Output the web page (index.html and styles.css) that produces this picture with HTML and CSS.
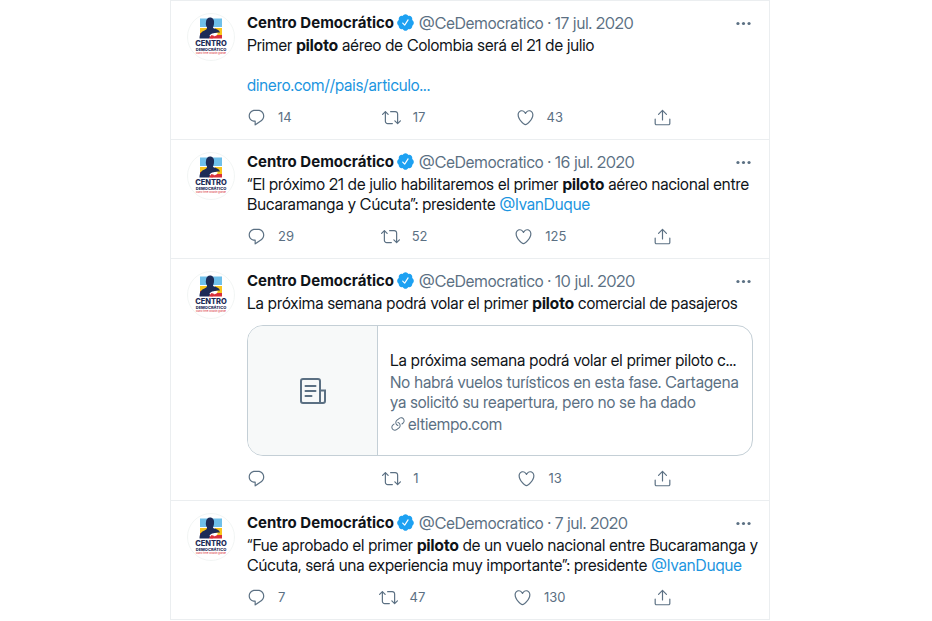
FILE: index.html
```html
<!DOCTYPE html>
<html lang="es">
<head>
<meta charset="utf-8">
<meta name="viewport" content="width=device-width, initial-scale=1">
<title>Centro Democrático</title>
<link rel="stylesheet" href="styles.css">
</head>
<body>
<svg class="sprite" aria-hidden="true">
  <symbol id="reply" viewBox="0 0 24 24"><path d="M14.046 2.242l-4.148-.01h-.002c-4.374 0-7.8 3.427-7.8 7.802 0 4.098 3.186 7.206 7.465 7.37v3.828c0 .108.044.286.12.403.142.225.384.347.632.347.138 0 .277-.038.402-.118.264-.168 6.473-4.14 8.088-5.506 1.902-1.61 3.04-3.97 3.043-6.312v-.017c-.006-4.367-3.43-7.787-7.8-7.788zm3.787 12.972c-1.134.96-4.862 3.405-6.772 4.643V16.67c0-.414-.335-.75-.75-.75h-.396c-3.66 0-6.318-2.476-6.318-5.886 0-3.534 2.768-6.302 6.3-6.302l4.147.01h.002c3.532 0 6.3 2.766 6.302 6.296-.003 1.91-.942 3.844-2.514 5.176z"/></symbol>
  <symbol id="retweet" viewBox="0 0 24 24"><path d="M23.77 15.67c-.292-.293-.767-.293-1.06 0l-2.22 2.22V7.65c0-2.068-1.683-3.75-3.75-3.75h-5.85c-.414 0-.75.336-.75.75s.336.75.75.75h5.85c1.24 0 2.25 1.01 2.25 2.25v10.24l-2.22-2.22c-.293-.293-.768-.293-1.06 0s-.294.768 0 1.06l3.5 3.5c.145.147.337.22.53.22s.383-.072.53-.22l3.5-3.5c.294-.292.294-.767 0-1.06zm-10.66 3.28H7.26c-1.24 0-2.25-1.01-2.25-2.25V6.46l2.22 2.22c.148.147.34.22.532.22s.384-.073.53-.22c.293-.293.293-.768 0-1.06l-3.5-3.5c-.293-.294-.768-.294-1.06 0l-3.5 3.5c-.294.292-.294.767 0 1.06s.767.293 1.06 0l2.22-2.22V16.7c0 2.068 1.683 3.75 3.75 3.75h5.85c.414 0 .75-.336.75-.75s-.337-.75-.75-.75z"/></symbol>
  <symbol id="like" viewBox="0 0 24 24"><path d="M12 21.638h-.014C9.403 21.59 1.95 14.856 1.95 8.478c0-3.064 2.525-5.754 5.403-5.754 2.29 0 3.83 1.58 4.646 2.73.814-1.148 2.354-2.73 4.645-2.73 2.88 0 5.404 2.69 5.404 5.755 0 6.376-7.454 13.11-10.037 13.157H12zM7.354 4.225c-2.08 0-3.903 1.988-3.903 4.255 0 5.74 7.034 11.596 8.55 11.658 1.518-.062 8.55-5.917 8.55-11.658 0-2.267-1.823-4.255-3.903-4.255-2.528 0-3.94 2.936-3.952 2.965-.23.562-1.156.562-1.387 0-.014-.03-1.425-2.965-3.954-2.965z"/></symbol>
  <symbol id="share" viewBox="0 0 24 24"><path d="M17.53 7.47l-5-5c-.293-.293-.768-.293-1.06 0l-5 5c-.294.293-.294.768 0 1.06s.767.294 1.06 0l3.72-3.72V15c0 .414.336.75.75.75s.75-.336.75-.75V4.81l3.72 3.72c.146.147.338.22.53.22s.384-.072.53-.22c.293-.293.293-.767 0-1.06z"/><path d="M19.708 21.944H4.292C3.028 21.944 2 20.916 2 19.652V14c0-.414.336-.75.75-.75s.75.336.75.75v5.652c0 .437.355.792.792.792h15.416c.437 0 .792-.355.792-.792V14c0-.414.336-.75.75-.75s.75.336.75.75v5.652c0 1.264-1.028 2.292-2.292 2.292z"/></symbol>
  <symbol id="more" viewBox="0 0 24 24"><circle cx="5" cy="12" r="2"/><circle cx="12" cy="12" r="2"/><circle cx="19" cy="12" r="2"/></symbol>
  <symbol id="verified" viewBox="0 0 24 24"><path d="M22.5 12.5c0-1.58-.875-2.95-2.148-3.6.154-.435.238-.905.238-1.4 0-2.21-1.71-3.998-3.818-3.998-.47 0-.92.084-1.336.25C14.818 2.415 13.51 1.5 12 1.5s-2.816.917-3.437 2.25c-.415-.165-.866-.25-1.336-.25-2.11 0-3.818 1.79-3.818 4 0 .494.083.964.237 1.4-1.272.65-2.147 2.018-2.147 3.6 0 1.495.782 2.798 1.942 3.486-.02.17-.032.34-.032.514 0 2.21 1.708 4 3.818 4 .47 0 .92-.086 1.335-.25.62 1.334 1.926 2.25 3.437 2.25 1.512 0 2.818-.916 3.437-2.25.415.163.865.248 1.336.248 2.11 0 3.818-1.79 3.818-4 0-.174-.012-.344-.033-.513 1.158-.687 1.943-1.99 1.943-3.484zm-6.616-3.334l-4.334 6.5c-.145.217-.382.334-.625.334-.143 0-.288-.04-.416-.126l-.115-.094-2.415-2.415c-.293-.293-.293-.768 0-1.06s.768-.294 1.06 0l1.77 1.767 3.825-5.74c.23-.345.696-.436 1.04-.207.346.23.44.696.21 1.04z"/></symbol>
  <symbol id="link" viewBox="0 0 24 24"><path d="M11.96 14.945c-.067 0-.136-.01-.203-.027-1.13-.318-2.097-.986-2.795-1.932-.832-1.125-1.176-2.508-.968-3.893s.942-2.605 2.068-3.438l3.53-2.608c2.322-1.716 5.61-1.224 7.33 1.1.83 1.127 1.175 2.51.967 3.895s-.943 2.605-2.07 3.438l-1.48 1.094c-.333.246-.804.175-1.05-.158-.246-.334-.176-.804.158-1.05l1.48-1.095c.803-.592 1.327-1.463 1.476-2.45.148-.988-.098-1.975-.69-2.778-1.225-1.656-3.572-2.01-5.23-.784l-3.53 2.608c-.802.593-1.326 1.464-1.475 2.45-.15.99.097 1.975.69 2.778.498.675 1.187 1.15 1.992 1.377.4.114.633.528.52.928-.092.33-.394.547-.722.547z"/><path d="M7.27 22.054c-1.61 0-3.197-.735-4.225-2.125-.832-1.127-1.176-2.51-.968-3.894s.943-2.605 2.07-3.438l1.478-1.094c.334-.245.805-.175 1.05.158s.177.804-.157 1.05l-1.48 1.095c-.803.593-1.326 1.464-1.475 2.45-.148.99.097 1.975.69 2.778 1.225 1.657 3.57 2.01 5.23.785l3.528-2.608c1.658-1.225 2.01-3.57.785-5.23-.498-.674-1.187-1.15-1.992-1.376-.4-.113-.633-.527-.52-.927.112-.4.528-.63.926-.522 1.13.318 2.096.986 2.794 1.932 1.717 2.324 1.224 5.612-1.1 7.33l-3.53 2.608c-.933.693-2.023 1.026-3.105 1.026z"/></symbol>
  <symbol id="logo" viewBox="0 0 96 96">
    <circle cx="48" cy="48" r="47" fill="#fff" stroke="#e4eae8"/>
    <path d="M26 11h20v17H26zM48 11h22v17H48z" fill="#6fc0ea"/>
    <path d="M26 30h14v12H26zM56 30h14v16H56z" fill="#f8c51c"/>
    <path d="M26 40h12v10H26zM50 44h20v7H44z" fill="#d9303a"/>
    <path d="M38 18c0-6 4-9 8-9 6 0 9 5 8 12 0 4-2 6-2 9 7 2 13 4 14 9-6 0-11 0-13 4l-9 8H25c0-9 4-14 10-16 4-2 5-3 5-6-2-3-3-7-2-11z" fill="#1c2b57"/>
    <path d="M45 45c5-5 11-6 17-4l-3 4-8 3-4 2z" fill="#fff"/>
    <path d="M44 50l5-6 6 2-4 5z" fill="#d9303a"/>
    <text class="logo-name" x="48" y="65" text-anchor="middle">CENTRO</text>
    <text class="logo-sub" x="48" y="75" text-anchor="middle">DEMOCRÁTICO</text>
    <text class="logo-tag" x="48" y="82" text-anchor="middle">Mano firme corazón grande</text>
  </symbol>
</svg>

<main class="timeline">
  <article class="tweet">
    <svg class="avatar" role="img" aria-label="Centro Democrático"><use href="#logo"/></svg>
    <div class="body">
      <header class="head">
        <a class="name" href="#">Centro Democrático</a>
        <svg class="badge"><use href="#verified"/></svg>
        <span class="meta">@CeDemocratico · 17 jul. 2020</span>
        <button class="more" aria-label="Más opciones"><svg class="icon"><use href="#more"/></svg></button>
      </header>
      <p class="text">Primer <b>piloto</b> aéreo de Colombia será el 21 de julio<br><br><a href="#">dinero.com//pais/articulo...</a></p>
      <footer class="actions">
        <button class="action" aria-label="Responder"><svg class="icon"><use href="#reply"/></svg><span class="count">14</span></button>
        <button class="action" aria-label="Retwittear"><svg class="icon"><use href="#retweet"/></svg><span class="count">17</span></button>
        <button class="action" aria-label="Me gusta"><svg class="icon"><use href="#like"/></svg><span class="count">43</span></button>
        <button class="action" aria-label="Compartir"><svg class="icon"><use href="#share"/></svg></button>
      </footer>
    </div>
  </article>

  <article class="tweet">
    <svg class="avatar" role="img" aria-label="Centro Democrático"><use href="#logo"/></svg>
    <div class="body">
      <header class="head">
        <a class="name" href="#">Centro Democrático</a>
        <svg class="badge"><use href="#verified"/></svg>
        <span class="meta">@CeDemocratico · 16 jul. 2020</span>
        <button class="more" aria-label="Más opciones"><svg class="icon"><use href="#more"/></svg></button>
      </header>
      <p class="text">“El próximo 21 de julio habilitaremos el primer <b>piloto</b> aéreo nacional entre Bucaramanga y Cúcuta”: presidente <a href="#">@IvanDuque</a></p>
      <footer class="actions">
        <button class="action" aria-label="Responder"><svg class="icon"><use href="#reply"/></svg><span class="count">29</span></button>
        <button class="action" aria-label="Retwittear"><svg class="icon"><use href="#retweet"/></svg><span class="count">52</span></button>
        <button class="action" aria-label="Me gusta"><svg class="icon"><use href="#like"/></svg><span class="count">125</span></button>
        <button class="action" aria-label="Compartir"><svg class="icon"><use href="#share"/></svg></button>
      </footer>
    </div>
  </article>

  <article class="tweet">
    <svg class="avatar" role="img" aria-label="Centro Democrático"><use href="#logo"/></svg>
    <div class="body">
      <header class="head">
        <a class="name" href="#">Centro Democrático</a>
        <svg class="badge"><use href="#verified"/></svg>
        <span class="meta">@CeDemocratico · 10 jul. 2020</span>
        <button class="more" aria-label="Más opciones"><svg class="icon"><use href="#more"/></svg></button>
      </header>
      <p class="text">La próxima semana podrá volar el primer <b>piloto</b> comercial de pasajeros</p>
      <a class="card" href="#">
        <span class="card-media">
          <svg class="news" viewBox="0 0 26 26"><path d="M3 1h15a2 2 0 0 1 2 2v22H3a2 2 0 0 1-2-2V3a2 2 0 0 1 2-2zM20 12.500h5V23a2 2 0 0 1-2 2h-3M5.500 8h10M5.500 13h10M5.500 18h6"/></svg>
        </span>
        <span class="card-info">
          <span class="card-title">La próxima semana podrá volar el primer piloto c...</span>
          <span class="card-desc">No habrá vuelos turísticos en esta fase. Cartagena ya solicitó su reapertura, pero no se ha dado</span>
          <span class="card-site"><svg class="link-icon"><use href="#link"/></svg>eltiempo.com</span>
        </span>
      </a>
      <footer class="actions">
        <button class="action" aria-label="Responder"><svg class="icon"><use href="#reply"/></svg><span class="count"></span></button>
        <button class="action" aria-label="Retwittear"><svg class="icon"><use href="#retweet"/></svg><span class="count">1</span></button>
        <button class="action" aria-label="Me gusta"><svg class="icon"><use href="#like"/></svg><span class="count">13</span></button>
        <button class="action" aria-label="Compartir"><svg class="icon"><use href="#share"/></svg></button>
      </footer>
    </div>
  </article>

  <article class="tweet">
    <svg class="avatar" role="img" aria-label="Centro Democrático"><use href="#logo"/></svg>
    <div class="body">
      <header class="head">
        <a class="name" href="#">Centro Democrático</a>
        <svg class="badge"><use href="#verified"/></svg>
        <span class="meta">@CeDemocratico · 7 jul. 2020</span>
        <button class="more" aria-label="Más opciones"><svg class="icon"><use href="#more"/></svg></button>
      </header>
      <p class="text">“Fue aprobado el primer <b>piloto</b> de un vuelo nacional entre Bucaramanga y Cúcuta, será una experiencia muy importante”: presidente <a href="#">@IvanDuque</a></p>
      <footer class="actions">
        <button class="action" aria-label="Responder"><svg class="icon"><use href="#reply"/></svg><span class="count">7</span></button>
        <button class="action" aria-label="Retwittear"><svg class="icon"><use href="#retweet"/></svg><span class="count">47</span></button>
        <button class="action" aria-label="Me gusta"><svg class="icon"><use href="#like"/></svg><span class="count">130</span></button>
        <button class="action" aria-label="Compartir"><svg class="icon"><use href="#share"/></svg></button>
      </footer>
    </div>
  </article>
</main>
</body>
</html>
```
FILE: styles.css
```css
* {
  box-sizing: border-box;
}

body {
  margin: 0;
  padding-left: 8px;
  background: #fff;
  color: #0f1419;
  font-family: "Inter Display", Inter, "Liberation Sans", sans-serif;
  font-size: 16px;
  line-height: 20px;
}

a {
  color: #1b95e0;
  text-decoration: none;
}

button {
  display: flex;
  align-items: center;
  padding: 0;
  border: 0;
  background: none;
  color: #5b7083;
  font: inherit;
  cursor: pointer;
}

svg {
  fill: currentColor;
  flex: none;
}

.sprite {
  position: absolute;
  width: 0;
  height: 0;
}

.timeline {
  max-width: 600px;
  margin: 0 auto;
  border: 1px solid #ebeef0;
  border-bottom: 0;
}

.tweet {
  display: flex;
  gap: 12px;
  padding: 12px 16px;
  border-bottom: 1px solid #ebeef0;
}

.avatar {
  width: 48px;
  height: 48px;
}

.logo-name,
.logo-sub {
  fill: #1c2b57;
  font-family: Inter, sans-serif;
  font-weight: 800;
  font-size: 15px;
}

.logo-sub {
  font-size: 8px;
}

.logo-tag {
  fill: #d9303a;
  font-size: 5px;
}

.body {
  flex: 1;
  min-width: 0;
}

.head {
  display: flex;
  align-items: center;
  height: 20px;
  margin-bottom: 2px;
  white-space: nowrap;
}

.name {
  color: #0f1419;
  font-family: Inter, "Liberation Sans", sans-serif;
  font-size: 15px;
  font-weight: 700;
}

.badge {
  width: 19px;
  height: 19px;
  margin: 0 4px 2px 2px;
  color: #1da1f2;
}

.meta {
  color: #5b7083;
}

.more {
  margin-left: auto;
}

.icon {
  width: 19px;
  height: 19px;
}

.text {
  margin: 0 -8px 0 0;
}

.actions {
  display: flex;
  justify-content: space-between;
  max-width: 425px;
  height: 20px;
  margin-top: 12px;
}

.count {
  min-width: 37px;
  padding: 0 12px;
  font-family: Inter, "Liberation Sans", sans-serif;
  font-size: 13px;
  text-align: left;
}

.card {
  display: flex;
  margin-top: 12px;
  overflow: hidden;
  border: 1px solid #c4cfd6;
  border-radius: 16px;
  color: #5b7083;
}

.card-media {
  display: flex;
  flex: none;
  align-items: center;
  justify-content: center;
  width: 130px;
  border-right: 1px solid #c4cfd6;
  background: #f7f9f9;
}

.news {
  width: 26px;
  height: 26px;
  fill: none;
  stroke: #5b7083;
  stroke-width: 2;
  stroke-linecap: round;
}

.card-info {
  display: flex;
  flex: 1;
  flex-direction: column;
  gap: 2px;
  min-width: 0;
  padding: 24px 12px 21px;
}

.card-title {
  overflow: hidden;
  color: #0f1419;
  text-overflow: ellipsis;
  white-space: nowrap;
}

.card-site {
  display: flex;
  align-items: center;
  gap: 2px;
}

.link-icon {
  width: 16px;
  height: 16px;
}
```
